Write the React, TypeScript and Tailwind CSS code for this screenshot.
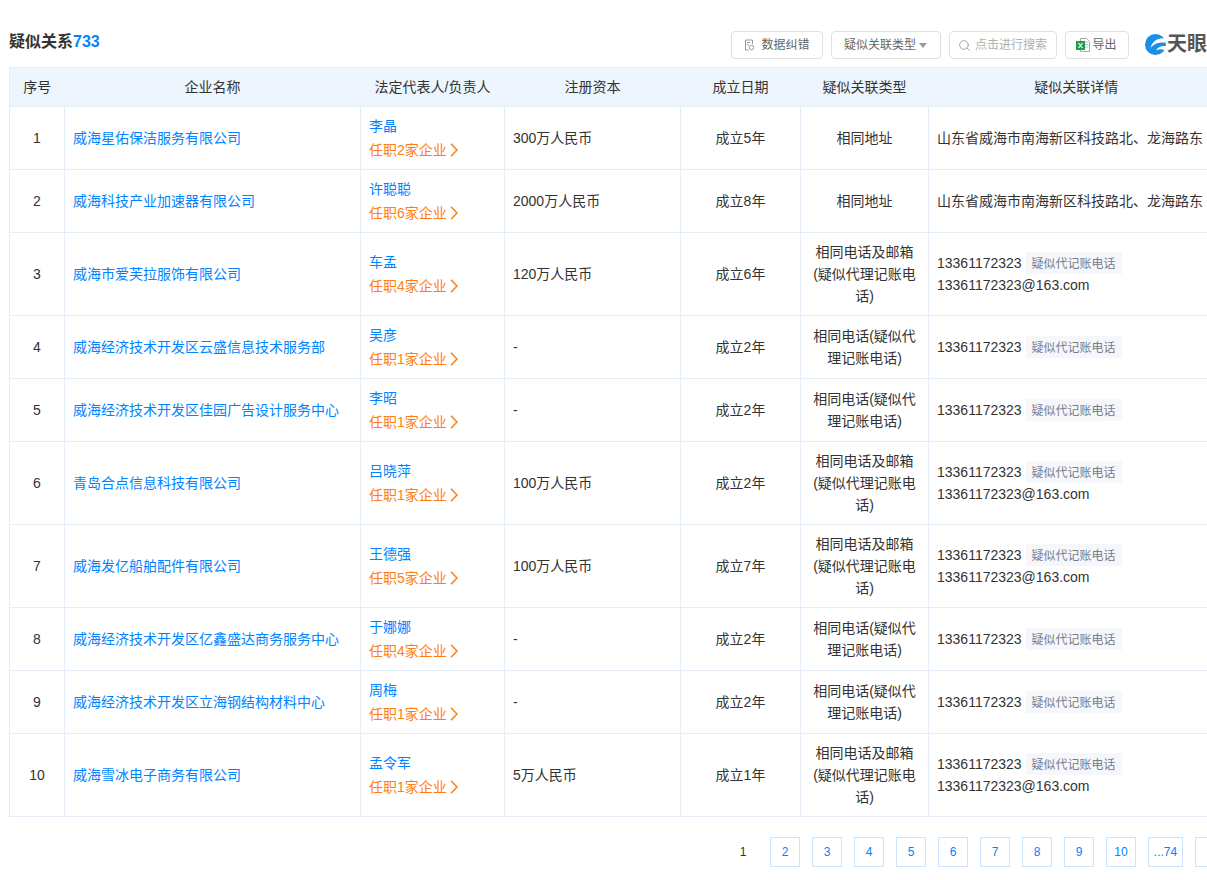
import { Search } from 'lucide-react';

const font = { fontFamily: '"Liberation Sans", "Noto Sans CJK SC", sans-serif' };

type Row = {
  name: string;
  person: string;
  jobs: number;
  capital: string;
  age: string;
  type: string;
  detail: 'address' | 'phone' | 'both';
};

const rows: Row[] = [
  { name: '威海星佑保洁服务有限公司', person: '李晶', jobs: 2, capital: '300万人民币', age: '成立5年', type: '相同地址', detail: 'address' },
  { name: '威海科技产业加速器有限公司', person: '许聪聪', jobs: 6, capital: '2000万人民币', age: '成立8年', type: '相同地址', detail: 'address' },
  { name: '威海市爱芙拉服饰有限公司', person: '车孟', jobs: 4, capital: '120万人民币', age: '成立6年', type: '相同电话及邮箱(疑似代理记账电话)', detail: 'both' },
  { name: '威海经济技术开发区云盛信息技术服务部', person: '吴彦', jobs: 1, capital: '-', age: '成立2年', type: '相同电话(疑似代理记账电话)', detail: 'phone' },
  { name: '威海经济技术开发区佳园广告设计服务中心', person: '李昭', jobs: 1, capital: '-', age: '成立2年', type: '相同电话(疑似代理记账电话)', detail: 'phone' },
  { name: '青岛合点信息科技有限公司', person: '吕晓萍', jobs: 1, capital: '100万人民币', age: '成立2年', type: '相同电话及邮箱(疑似代理记账电话)', detail: 'both' },
  { name: '威海发亿船舶配件有限公司', person: '王德强', jobs: 5, capital: '100万人民币', age: '成立7年', type: '相同电话及邮箱(疑似代理记账电话)', detail: 'both' },
  { name: '威海经济技术开发区亿鑫盛达商务服务中心', person: '于娜娜', jobs: 4, capital: '-', age: '成立2年', type: '相同电话(疑似代理记账电话)', detail: 'phone' },
  { name: '威海经济技术开发区立海钢结构材料中心', person: '周梅', jobs: 1, capital: '-', age: '成立2年', type: '相同电话(疑似代理记账电话)', detail: 'phone' },
  { name: '威海雪冰电子商务有限公司', person: '孟令军', jobs: 1, capital: '5万人民币', age: '成立1年', type: '相同电话及邮箱(疑似代理记账电话)', detail: 'both' },
];

const headers = ['序号', '企业名称', '法定代表人/负责人', '注册资本', '成立日期', '疑似关联类型', '疑似关联详情'];
const pages = ['2', '3', '4', '5', '6', '7', '8', '9', '10'];

function Phone() {
  return (
    <div className="flex items-center h-[22px]">
      <span>13361172323</span>
      <span className="ml-[4px] px-[6px] h-[22px] leading-[24px] bg-[#f5f7fb] text-[#777c8a] text-xs">疑似代记账电话</span>
    </div>
  );
}

function Detail({ kind }: { kind: Row['detail'] }) {
  if (kind === 'address') {
    return <div className="whitespace-nowrap">山东省威海市南海新区科技路北、龙海路东</div>;
  }
  return (
    <div>
      <Phone />
      {kind === 'both' && <div className="leading-[22px]">13361172323@163.com</div>}
    </div>
  );
}

export default function App() {
  return (
    <div className="relative w-[1207px] h-[880px] overflow-hidden bg-white text-sm text-[#333]" style={font}>
      <div className="absolute left-[9px] top-[32px] text-base font-bold leading-5 text-[#333] flex items-center">
        疑似关系<span className="text-[#0084ff]">733</span>
      </div>

      <div className="absolute left-[731px] top-[31px] h-[28px] flex gap-2 text-xs text-[#666]">
        <div className="w-[92px] border border-[#e0e0e0] rounded-sm flex items-center justify-center gap-[6px]">
          <svg width="11" height="12" viewBox="0 0 11 12" fill="none" stroke="#999" strokeWidth="1">
            <path d="M8.500 5V1H1.500v10h3" />
            <circle cx="7.500" cy="8.500" r="2.200" />
            <path d="M3 3.500h3M3 6h2" />
          </svg>
          数据纠错
        </div>
        <div className="w-[110px] border border-[#e0e0e0] rounded-sm flex items-center justify-center gap-[3px] pr-[1px]">
          疑似关联类型
          <span className="w-0 h-0 border-x-[4px] border-x-transparent border-t-[5px] border-t-[#999]" />
        </div>
        <div className="w-[108px] border border-[#e0e0e0] rounded-sm flex items-center justify-center gap-[4px] text-[#b0b0b0] pr-[1px]">
          <Search size={13} strokeWidth={1.5} className="text-[#999]" />
          点击进行搜索
        </div>
        <div className="w-[64px] border border-[#e0e0e0] rounded-sm flex items-center justify-center gap-[2px] pr-[1px]">
          <svg width="14" height="14" viewBox="0 0 14 14">
            <path d="M4.500 .5h6l3 3v10h-9z" fill="#fff" stroke="#aaa" />
            <path d="M9 4h3M9 6.500h3M9 9h3" stroke="#bbb" />
            <rect x="0" y="3" width="9" height="9" fill="#1f9d55" />
            <path d="M2.500 5l4 5M6.500 5l-4 5" stroke="#fff" strokeWidth="1.200" />
          </svg>
          导出
        </div>
      </div>

      <div className="absolute left-[1145px] top-[31px] h-[26px] flex items-center whitespace-nowrap">
        <svg width="21" height="21" viewBox="0 0 21 21">
          <circle cx="10.500" cy="10.500" r="10.500" fill="#1a8fe8" />
          <path d="M20 4.500C13 3.500 7.500 7 5.500 14 8.500 10 13 8 21 8.500z" fill="#fff" />
          <path d="M21 12C16.500 11.500 12.500 13 11 16.500c2.500-1.500 5.500-1.500 9-.5z" fill="#fff" />
        </svg>
        <span className="ml-[1px] text-[20px] font-semibold text-[#555]">天眼查</span>
      </div>

      <table className="absolute left-[9px] top-[67px] w-[1215px] table-fixed border-collapse border border-[#e3eef8]">
        <colgroup>
          <col className="w-[55px]" />
          <col className="w-[296px]" />
          <col className="w-[144px]" />
          <col className="w-[176px]" />
          <col className="w-[120px]" />
          <col className="w-[128px]" />
          <col className="w-[296px]" />
        </colgroup>
        <thead>
          <tr className="h-[39px] bg-[#eef5fc]">
            {headers.map((h) => (
              <th key={h} className="font-normal text-sm text-[#333] text-center whitespace-nowrap p-0">
                {h}
              </th>
            ))}
          </tr>
        </thead>
        <tbody>
          {rows.map((r, i) => (
            <tr key={r.name} className={r.detail === 'both' ? 'h-[83px]' : 'h-[63px]'}>
              <td className="border border-[#e3eef8] text-center p-0">{i + 1}</td>
              <td className="border border-[#e3eef8] px-2 text-[#0084ff] whitespace-nowrap">{r.name}</td>
              <td className="border border-[#e3eef8] px-2">
                <div className="text-[#0084ff] leading-6">{r.person}</div>
                <div className="text-[#ff7e14] leading-6 flex items-center">
                  任职{r.jobs}家企业
                  <svg width="10" height="14" viewBox="0 0 10 14" fill="none" stroke="#ff7e14" strokeWidth="1.500" className="ml-[2px]">
                    <path d="M2 .8l6 6.200-6 6.200" />
                  </svg>
                </div>
              </td>
              <td className="border border-[#e3eef8] px-2">{r.capital}</td>
              <td className="border border-[#e3eef8] text-center p-0">{r.age}</td>
              <td className="border border-[#e3eef8] text-center px-2 leading-[22px]">{r.type}</td>
              <td className="border border-[#e3eef8] px-2">
                <Detail kind={r.detail} />
              </td>
            </tr>
          ))}
        </tbody>
      </table>

      <div className="absolute left-[728px] top-[837px] h-[30px] flex gap-3 text-xs text-[#0084ff]">
        <div className="w-[30px] flex items-center justify-center text-[#333]">1</div>
        {pages.map((p) => (
          <div key={p} className="w-[30px] border border-[#cce4fb] flex items-center justify-center">{p}</div>
        ))}
        <div className="w-[35px] border border-[#cce4fb] flex items-center justify-center">...74</div>
        <div className="w-[30px] border border-[#cce4fb] shrink-0" />
      </div>
    </div>
  );
}
